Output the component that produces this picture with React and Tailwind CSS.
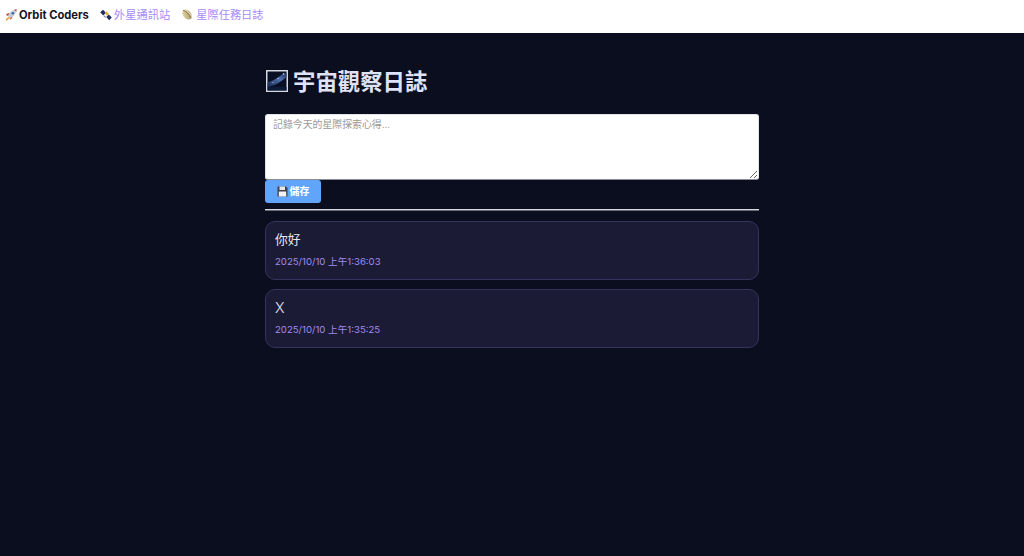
const font = { fontFamily: '"Inter", "Noto Sans CJK TC", sans-serif' };

function RocketIcon() {
  return (
    <svg width="12" height="12" viewBox="0 0 12 12" className="shrink-0">
      <path d="M3.800 7.600 5 9 1.500 11.800 0.600 10.800z" fill="#f2902a" />
      <path d="M3.400 8.300 4.200 9 2 10.500z" fill="#f9d24a" />
      <path d="M3.300 4.200 1.200 5.300 1.600 6.600 3.400 6.800 4.800 4.300z" fill="#c23b3b" />
      <path d="M7.700 7 7 9 5.600 10.700 5 9l1-1.200z" fill="#c23b3b" />
      <path d="M3 7c.8-3.200 4-6.200 8.600-6.800C11.200 4.500 8.400 8 5 9z" fill="#c6ccd6" />
      <path d="M9 .7c1 .2 1.800 1 2.200 2.200l.4-2.700z" fill="#b83a3a" />
      <circle cx="7.800" cy="4.300" r="1.300" fill="#36689e" />
    </svg>
  );
}

function SatelliteIcon() {
  return (
    <svg width="12" height="12" viewBox="0 0 12 12" className="shrink-0">
      <path d="M.2 3.200 3 .8 6 3.800 3.200 6.400z" fill="#1f2f63" />
      <path d="M6.200 8 8.800 5.400 11.800 8.600 9.200 11.200z" fill="#1f2f63" />
      <path d="M4.600 3.800 6.400 2.200 9 5 7.200 7z" fill="#dcae3c" />
      <path d="M3.800 6.800 5.600 8.400" stroke="#8a8f9c" strokeWidth="1.200" />
    </svg>
  );
}

function RingedPlanetIcon() {
  return (
    <svg width="12" height="13" viewBox="0 0 12 13" className="shrink-0">
      <defs>
        <linearGradient id="planet" x1="0" y1="0" x2="1" y2="1">
          <stop offset="0" stopColor="#e8dcae" />
          <stop offset="1" stopColor="#a8935a" />
        </linearGradient>
      </defs>
      <ellipse cx="6" cy="6.500" rx="3.900" ry="5.700" transform="rotate(-40 6 6.500)" fill="url(#planet)" />
      <path d="M2 2.200c3 .8 6.500 4.200 8 8.200" stroke="#7f7350" strokeWidth=".9" fill="none" />
      <path d="M3.500 1.500c2.800 1 5.800 3.800 7 7" stroke="#f1ecd8" strokeWidth=".8" fill="none" />
    </svg>
  );
}

function MilkyWayIcon() {
  return (
    <svg width="22" height="22" viewBox="0 0 22 22" className="shrink-0">
      <defs>
        <linearGradient id="sky" x1="0" y1="1" x2="1" y2="0">
          <stop offset="0" stopColor="#16294f" />
          <stop offset="0.600" stopColor="#4f6fae" />
          <stop offset="1" stopColor="#222f5c" />
        </linearGradient>
      </defs>
      <rect width="22" height="22" fill="#d5d9e2" />
      <rect x="1.500" y="1.500" width="19" height="19" fill="#0a1024" />
      <path d="M1.500 12.500C7 11 13 7 18.500 2.500l2 1.500V7C15 12 8 16 1.500 17z" fill="url(#sky)" />
      <rect x="1.500" y="17" width="19" height="3.500" fill="#0d1a3a" />
      <circle cx="17.500" cy="4" r=".7" fill="#dfe7fa" />
      <circle cx="12" cy="8.500" r=".6" fill="#dfe7fa" />
      <circle cx="7" cy="12.500" r=".5" fill="#dfe7fa" />
    </svg>
  );
}

function FloppyIcon() {
  return (
    <svg width="11" height="11" viewBox="0 0 11 11" className="shrink-0">
      <path d="M.5.500h8.500l1.500 1.500v8.500H.5z" fill="#3f4147" />
      <rect x="2.500" y=".5" width="5.500" height="3.500" fill="#e6e7ea" />
      <rect x="1.800" y="5.500" width="7.400" height="5" fill="#f4f4f5" />
    </svg>
  );
}

function LogCard({ children, time }) {
  return (
    <div className="h-[59px] rounded-[10px] border border-[#34335c] bg-[#1c1b36] px-[9px] pt-[8px]">
      {children}
      <p className="mt-[5px] text-[9.600px] leading-[14px] text-[#a08bec]">{time}</p>
    </div>
  );
}

export default function App() {
  return (
    <div style={font} className="min-h-[556px] bg-[#0b0e1f]">
      <nav className="flex h-[33px] items-center gap-[11px] bg-white pb-[3px] pl-[5px]">
        <a className="flex items-center gap-[2px] text-[11.200px] font-bold text-[#12131f]">
          <RocketIcon />
          Orbit Coders
        </a>
        <a className="flex items-center gap-[2px] text-[11.300px] text-[#a78bfa]">
          <SatelliteIcon />
          外星通訊站
        </a>
        <a className="flex items-center gap-[3px] text-[11.200px] text-[#a78bfa]">
          <RingedPlanetIcon />
          星際任務日誌
        </a>
      </nav>
      <main className="mx-auto w-[494px] pt-[35px]">
        <h1 className="flex h-[26px] items-center gap-[5px] pl-[1px] text-[22.400px] leading-[29px] font-bold text-[#dfe3f5]">
          <MilkyWayIcon />
          宇宙觀察日誌
        </h1>
        <textarea
          className="mt-[20px] block h-[66px] w-full rounded-[3px] border border-[#e4e4e8] border-b-[#8a8c96] bg-white px-[7px] py-[2px] text-[9.900px] text-black placeholder:text-[#9a9a9a]"
          placeholder="記錄今天的星際探索心得..."
        />
        <button className="flex h-[23px] w-[56px] items-center justify-center gap-[2px] rounded-[3px] bg-[#60a5fa] text-[10px] font-semibold text-white">
          <FloppyIcon />
          儲存
        </button>
        <hr className="mt-[6px] h-[2px] border-t border-b border-t-[#d4d6dc] border-b-[#6a6c78]" />
        <div className="mt-[10px] flex flex-col gap-[9px]">
          <LogCard time="2025/10/10 上午1:36:03">
            <p className="text-[12.800px] leading-[20px] text-[#e6e8f5]">你好</p>
          </LogCard>
          <LogCard time="2025/10/10 上午1:35:25">
            <p className="text-[14.400px] leading-[20px] font-light text-[#e6e8f5]">X</p>
          </LogCard>
        </div>
      </main>
    </div>
  );
}
